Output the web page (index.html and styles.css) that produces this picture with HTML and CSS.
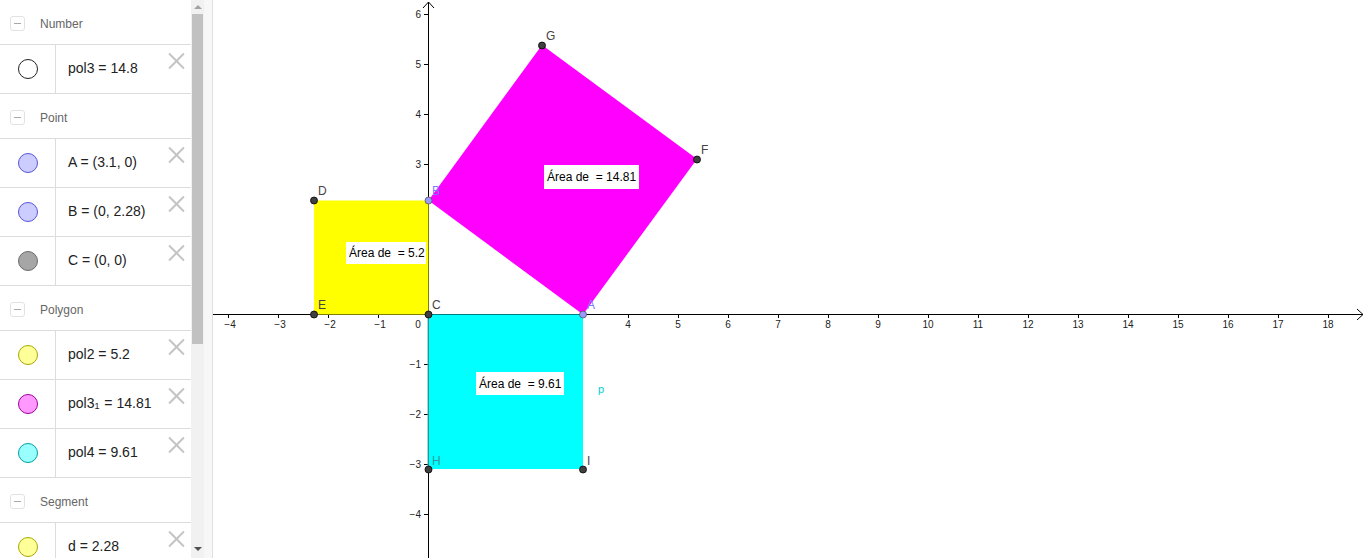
FILE: index.html
```html
<!DOCTYPE html>
<html>
<head>
<meta charset="utf-8">
<link rel="stylesheet" href="styles.css">
</head>
<body>
<div class="app">
  <div class="algebra">
    <div class="group">
      <div class="ghead"><span class="minus"></span><span class="gname">Number</span></div>
      <div class="item"><div class="mark"><span class="dot d-num"></span></div><div class="expr">pol3 = 14.8</div><span class="close"></span></div>
    </div>
    <div class="group">
      <div class="ghead"><span class="minus"></span><span class="gname">Point</span></div>
      <div class="item"><div class="mark"><span class="dot d-pt"></span></div><div class="expr">A = (3.1, 0)</div><span class="close"></span></div>
      <div class="item"><div class="mark"><span class="dot d-pt"></span></div><div class="expr">B = (0, 2.28)</div><span class="close"></span></div>
      <div class="item"><div class="mark"><span class="dot d-gray"></span></div><div class="expr">C = (0, 0)</div><span class="close"></span></div>
    </div>
    <div class="group">
      <div class="ghead"><span class="minus"></span><span class="gname">Polygon</span></div>
      <div class="item"><div class="mark"><span class="dot d-yel"></span></div><div class="expr">pol2 = 5.2</div><span class="close"></span></div>
      <div class="item"><div class="mark"><span class="dot d-mag"></span></div><div class="expr">pol3<sub>1</sub> = 14.81</div><span class="close"></span></div>
      <div class="item"><div class="mark"><span class="dot d-cya"></span></div><div class="expr">pol4 = 9.61</div><span class="close"></span></div>
    </div>
    <div class="group">
      <div class="ghead"><span class="minus"></span><span class="gname">Segment</span></div>
      <div class="item"><div class="mark"><span class="dot d-yel"></span></div><div class="expr">d = 2.28</div><span class="close"></span></div>
    </div>
  </div>
  <div class="scrollbar">
    <span class="arrow-up"></span>
    <div class="thumb"></div>
    <span class="arrow-down"></span>
  </div>
  <div class="gutter"></div>
  <div class="canvas">
    <svg class="graph" width="1153" height="558" viewBox="213 0 1153 558" xmlns="http://www.w3.org/2000/svg">
      <g class="axes" stroke="#000" stroke-width="1" fill="none" shape-rendering="crispEdges">
        <line x1="213" y1="314.5" x2="1363" y2="314.5"/>
        <line x1="428.5" y1="2" x2="428.5" y2="558"/>
        <g id="xticks">
          <line x1="228.5" y1="314" x2="228.5" y2="318"/>
          <line x1="278.5" y1="314" x2="278.5" y2="318"/>
          <line x1="328.5" y1="314" x2="328.5" y2="318"/>
          <line x1="378.5" y1="314" x2="378.5" y2="318"/>
          <line x1="478.5" y1="314" x2="478.5" y2="318"/>
          <line x1="528.5" y1="314" x2="528.5" y2="318"/>
          <line x1="578.5" y1="314" x2="578.5" y2="318"/>
          <line x1="628.5" y1="314" x2="628.5" y2="318"/>
          <line x1="678.5" y1="314" x2="678.5" y2="318"/>
          <line x1="728.5" y1="314" x2="728.5" y2="318"/>
          <line x1="778.5" y1="314" x2="778.5" y2="318"/>
          <line x1="828.5" y1="314" x2="828.5" y2="318"/>
          <line x1="878.5" y1="314" x2="878.5" y2="318"/>
          <line x1="928.5" y1="314" x2="928.5" y2="318"/>
          <line x1="978.5" y1="314" x2="978.5" y2="318"/>
          <line x1="1028.5" y1="314" x2="1028.5" y2="318"/>
          <line x1="1078.5" y1="314" x2="1078.5" y2="318"/>
          <line x1="1128.5" y1="314" x2="1128.5" y2="318"/>
          <line x1="1178.5" y1="314" x2="1178.5" y2="318"/>
          <line x1="1228.5" y1="314" x2="1228.5" y2="318"/>
          <line x1="1278.5" y1="314" x2="1278.5" y2="318"/>
          <line x1="1328.5" y1="314" x2="1328.5" y2="318"/>
        </g>
        <g id="yticks">
          <line x1="424" y1="14.5" x2="428" y2="14.5"/>
          <line x1="424" y1="64.5" x2="428" y2="64.5"/>
          <line x1="424" y1="114.5" x2="428" y2="114.5"/>
          <line x1="424" y1="164.5" x2="428" y2="164.5"/>
          <line x1="424" y1="214.5" x2="428" y2="214.5"/>
          <line x1="424" y1="264.5" x2="428" y2="264.5"/>
          <line x1="424" y1="364.5" x2="428" y2="364.5"/>
          <line x1="424" y1="414.5" x2="428" y2="414.5"/>
          <line x1="424" y1="464.5" x2="428" y2="464.5"/>
          <line x1="424" y1="514.5" x2="428" y2="514.5"/>
        </g>
      </g>
      <polyline points="1357,309 1363,314.5 1357,320" fill="none" stroke="#000" stroke-width="1"/>
      <polyline points="423,8 428.5,2 434,8" fill="none" stroke="#000" stroke-width="1"/>
      <g class="ticklabels" font-family="Liberation Sans, Arial, sans-serif" font-size="10" fill="#222" text-anchor="middle">
        <text x="230" y="328">−4</text>
        <text x="280" y="328">−3</text>
        <text x="330" y="328">−2</text>
        <text x="380" y="328">−1</text>
        <text x="418" y="328">0</text>
        <text x="478" y="328">1</text>
        <text x="528" y="328">2</text>
        <text x="578" y="328">3</text>
        <text x="628" y="328">4</text>
        <text x="678" y="328">5</text>
        <text x="728" y="328">6</text>
        <text x="778" y="328">7</text>
        <text x="828" y="328">8</text>
        <text x="878" y="328">9</text>
        <text x="928" y="328">10</text>
        <text x="978" y="328">11</text>
        <text x="1028" y="328">12</text>
        <text x="1078" y="328">13</text>
        <text x="1128" y="328">14</text>
        <text x="1178" y="328">15</text>
        <text x="1228" y="328">16</text>
        <text x="1278" y="328">17</text>
        <text x="1328" y="328">18</text>
      </g>
      <g font-family="Liberation Sans, Arial, sans-serif" font-size="10" fill="#222" text-anchor="end">
        <text x="421" y="18">6</text>
        <text x="421" y="68">5</text>
        <text x="421" y="118">4</text>
        <text x="421" y="168">3</text>
        <text x="421" y="218">2</text>
        <text x="421" y="268">1</text>
        <text x="421" y="368">−1</text>
        <text x="421" y="418">−2</text>
        <text x="421" y="468">−3</text>
        <text x="421" y="518">−4</text>
      </g>
      <polygon points="314,200.5 428.5,200.5 428.5,314.5 314,314.5" fill="#ffff00"/>
      <polygon points="428.5,200.5 583,314.5 697,159 542,45" fill="#ff00ff"/>
      <polygon points="428.5,314.5 583,314.5 583,469 428.5,469" fill="#00ffff"/>
      <line x1="428" y1="314" x2="428" y2="469" stroke="#5aa" stroke-width="1"/>
      <g class="boxes" font-family="Liberation Sans, Arial, sans-serif" font-size="12" fill="#000">
        <rect x="346" y="242" width="80" height="22" fill="#fff"/>
        <text x="349" y="257" class="pre">Área de  = 5.2</text>
        <rect x="544" y="165" width="95" height="24" fill="#fff"/>
        <text x="547" y="181" class="pre">Área de  = 14.81</text>
        <rect x="476" y="372" width="88" height="23" fill="#fff"/>
        <text x="479" y="388" class="pre">Área de  = 9.61</text>
      </g>
      <g class="points" stroke="#000" stroke-width="0.8">
        <circle cx="314" cy="200.5" r="3.5" fill="#404040"/>
        <circle cx="314" cy="314.5" r="3.5" fill="#404040"/>
        <circle cx="428.5" cy="314.5" r="3.5" fill="#404040"/>
        <circle cx="542" cy="45.5" r="3.5" fill="#404040"/>
        <circle cx="697" cy="159.5" r="3.5" fill="#404040"/>
        <circle cx="428.5" cy="469.5" r="3.5" fill="#404040"/>
        <circle cx="583" cy="469.5" r="3.5" fill="#404040"/>
        <circle cx="428.5" cy="200.5" r="3.5" fill="#9999ff" stroke="#555"/>
        <circle cx="583" cy="314.5" r="3.5" fill="#9999ff" stroke="#555"/>
      </g>
      <g font-family="Liberation Sans, Arial, sans-serif" font-size="12" fill="#444">
        <text x="318" y="195">D</text>
        <text x="318" y="309">E</text>
        <text x="432" y="309">C</text>
        <text x="546" y="40">G</text>
        <text x="701" y="154">F</text>
        <text x="587" y="465">I</text>
        <text x="432" y="195" fill="#7b7bff">B</text>
        <text x="587" y="309" fill="#7b7bff">A</text>
        <text x="432" y="465" fill="#2a9d9d">H</text>
        <text x="598" y="393" fill="#00d0d0" font-size="11">p</text>
      </g>
    </svg>
  </div>
</div>
</body>
</html>
```

FILE: styles.css
```css
html, body {
  margin: 0;
  padding: 0;
  background: #fff;
  font-family: "Liberation Sans", Arial, sans-serif;
  overflow: hidden;
}

.app {
  display: flex;
  width: 1366px;
  height: 558px;
  overflow: hidden;
}

.algebra {
  width: 191px;
  flex: none;
  height: 558px;
  overflow: hidden;
  background: #fff;
}

.group {
  display: flex;
  flex-direction: column;
}

.ghead {
  height: 44px;
  border-bottom: 1px solid #dcdcdc;
  display: flex;
  align-items: center;
  box-sizing: content-box;
}

.minus {
  width: 13px;
  height: 13px;
  margin-left: 10px;
  margin-top: 3px;
  border: 1px solid #e2e2e2;
  border-radius: 3px;
  position: relative;
  flex: none;
}

.minus::after {
  content: "";
  position: absolute;
  left: 3px;
  top: 6px;
  width: 7px;
  height: 1px;
  background: #a8a8a8;
}

.gname {
  margin-left: 15px;
  margin-top: 3px;
  font-size: 12px;
  color: #666;
}

.item {
  height: 48px;
  border-bottom: 1px solid #dcdcdc;
  display: flex;
  align-items: stretch;
}

.mark {
  width: 56px;
  flex: none;
  border-right: 1px solid #dcdcdc;
  display: flex;
  align-items: center;
  justify-content: center;
  box-sizing: border-box;
}

.dot {
  width: 18px;
  height: 18px;
  border-radius: 50%;
  border: 1px solid #000;
  box-sizing: content-box;
}

.d-num { background: #fff; border-color: #222; }
.d-pt { background: #ccccff; border-color: #5555dd; }
.d-gray { background: #a6a6a6; border-color: #6a6a6a; }
.d-yel { background: #ffff99; border-color: #a8a800; }
.d-mag { background: #ff99ff; border-color: #a000a0; }
.d-cya { background: #99ffff; border-color: #00a0a0; }

.expr {
  flex: 1;
  display: flex;
  align-items: center;
  padding-left: 12px;
  padding-bottom: 3px;
  font-size: 14px;
  color: #222;
  white-space: pre;
}

.expr sub {
  font-size: 9px;
  position: relative;
  top: 3px;
  margin-right: 1px;
}

.close {
  width: 16px;
  height: 16px;
  margin-top: 8px;
  margin-right: 7px;
  flex: none;
  position: relative;
  align-self: flex-start;
}

.close::before,
.close::after {
  content: "";
  position: absolute;
  left: -2px;
  top: 7px;
  width: 21px;
  height: 2px;
  background: #c4c4c4;
}

.close::before { transform: rotate(45deg); }
.close::after { transform: rotate(-45deg); }

.scrollbar {
  width: 13px;
  flex: none;
  background: #f1f1f1;
  display: flex;
  flex-direction: column;
  align-items: center;
}

.arrow-up {
  margin-top: 5px;
  width: 0;
  height: 0;
  border-left: 4px solid transparent;
  border-right: 4px solid transparent;
  border-bottom: 4px solid #a3a3a3;
}

.thumb {
  margin-top: 5px;
  width: 11px;
  height: 330px;
  background: #c1c1c1;
}

.arrow-down {
  margin-top: auto;
  margin-bottom: 7px;
  width: 0;
  height: 0;
  border-left: 4px solid transparent;
  border-right: 4px solid transparent;
  border-top: 4px solid #505050;
}

.gutter {
  width: 8px;
  flex: none;
  background: #f7f7f7;
  border-right: 1px solid #e0e0e0;
}

.canvas {
  flex: 1;
  height: 558px;
  overflow: hidden;
  background: #fff;
}

.graph {
  display: block;
}

.pre {
  white-space: pre;
}
```
